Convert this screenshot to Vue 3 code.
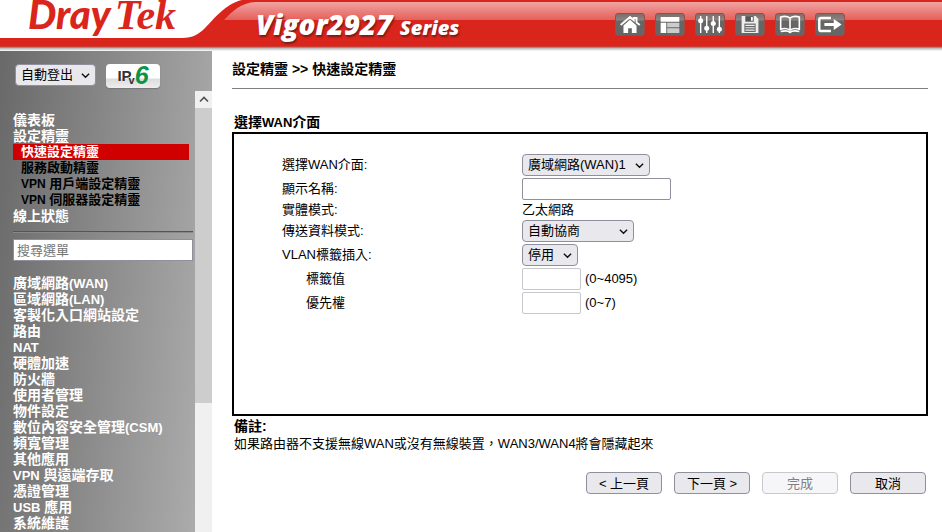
<script setup>
import { ref } from 'vue'

const autoLogout = ref('自動登出')
const search = ref('')
const wan = ref('廣域網路(WAN)1')
const displayName = ref('')
const mode = ref('自動協商')
const vlan = ref('停用')
const tagValue = ref('')
const priority = ref('')

const topMenu = [{ text: '儀表板' }, { text: '設定精靈' }]
const wizardMenu = [
  { text: '快速設定精靈', active: true },
  { text: '服務啟動精靈' },
  { lead: 'VPN', text: ' 用戶端設定精靈' },
  { lead: 'VPN', text: ' 伺服器設定精靈' },
]
const mainMenu = [
  { text: '廣域網路', tail: '(WAN)' },
  { text: '區域網路', tail: '(LAN)' },
  { text: '客製化入口網站設定' },
  { text: '路由' },
  { lead: 'NAT' },
  { text: '硬體加速' },
  { text: '防火牆' },
  { text: '使用者管理' },
  { text: '物件設定' },
  { text: '數位內容安全管理', tail: '(CSM)' },
  { text: '頻寬管理' },
  { text: '其他應用' },
  { lead: 'VPN', text: ' 與遠端存取' },
  { text: '憑證管理' },
  { lead: 'USB', text: ' 應用' },
  { text: '系統維護' },
]
</script>

<template>
  <div class="page">
    <header class="banner">
      <svg class="swoosh" viewBox="0 0 270 51" aria-hidden="true">
        <path d="M0 0H242C225 4 214 19 205 28C199 34 193 38 182 38H0Z" fill="#fff" />
        <path d="M224 20C233 11 241 2 258 2H270V20Z" fill="url(#gloss)" />
        <defs>
          <linearGradient id="gloss" x1="0" y1="0" x2="0" y2="1">
            <stop offset="0" stop-color="#f1a3a1" />
            <stop offset="1" stop-color="#e4605a" />
          </linearGradient>
        </defs>
      </svg>
      <div class="gloss"></div>
      <div class="brand"><span class="dray">Dray</span><span class="tek">Tek</span></div>
      <div class="model">Vigor2927 <small>Series</small></div>
      <nav class="tools">
        <button type="button" aria-label="Home">
          <svg viewBox="0 0 30 22"><path d="M5 11.500L15 3l4 3.400V4h3v5L25.500 11.500" fill="none" stroke="#fff" stroke-width="2" /><path d="M8 12l7-6 7 6v8h-5v-5h-4v5H8z" fill="#fff" /></svg>
        </button>
        <button type="button" aria-label="Layout">
          <svg viewBox="0 0 30 22"><path d="M5 3h20v5H5zM5 9h6v11H5z" fill="#fff" /><path d="M12 9h13v5H12zM12 15h13v5H12z" fill="#ccc" /></svg>
        </button>
        <button type="button" aria-label="Settings">
          <svg viewBox="0 0 30 22"><path d="M5 2v18M11.500 2v18M18.500 2v18M25 2v18" stroke="#fff" stroke-width="1.500" /><g fill="#fff"><circle cx="5" cy="7" r="2.700" /><circle cx="11.500" cy="15" r="2.700" /><circle cx="18.500" cy="10" r="2.700" /><circle cx="25" cy="16" r="2.700" /></g></svg>
        </button>
        <button type="button" aria-label="Save">
          <svg viewBox="0 0 30 22"><path d="M6 2h15l3 3v15H6z" fill="#eee" /><path d="M10 2h9v6h-9z" fill="#555" /><path d="M16 3h2v4h-2z" fill="#fff" /><path d="M9 10h12v9H9z" fill="#666" /><path d="M10 12h10M10 14.500h10M10 17h10" stroke="#eee" stroke-width="1.300" /></svg>
        </button>
        <button type="button" aria-label="Manual">
          <svg viewBox="0 0 30 22"><path d="M15 4c-3-2-7-2-10-1v13c3-1 7-1 10 1c3-2 7-2 10-1V3c-3-1-7-1-10 1zV17M5 18.500c4-1 8-1 10 1c2-2 6-2 10-1" fill="none" stroke="#fff" stroke-width="1.700" /></svg>
        </button>
        <button type="button" aria-label="Logout">
          <svg viewBox="0 0 30 22"><path d="M16 4H5.500q-2 0-2 2v10q0 2 2 2H16" fill="none" stroke="#fff" stroke-width="2.600" /><path d="M9 9.300h10V5l8.500 6-8.500 6v-4.300H9z" fill="#fff" /></svg>
        </button>
      </nav>
    </header>

    <div class="body">
      <aside class="sidebar">
        <div class="session">
          <span class="pick">
            <select v-model="autoLogout" aria-label="自動登出"><option>自動登出</option></select>
            <svg class="chev" viewBox="0 0 10 7"><path d="M1 1.500l4 4 4-4" /></svg>
          </span>
          <button type="button" class="ipv6" aria-label="IPv6">IP<sub>v</sub><i>6</i></button>
        </div>
        <div class="frame">
          <nav class="menu">
            <ul>
              <li v-for="m in topMenu" :key="m.text"><a href="#">{{ m.text }}</a></li>
              <li v-for="m in wizardMenu" :key="m.text" class="sub" :class="{ active: m.active }">
                <a href="#"><span v-if="m.lead" class="latin">{{ m.lead }}</span>{{ m.text }}</a>
              </li>
              <li><a href="#">線上狀態</a></li>
            </ul>
            <hr />
            <input v-model="search" class="search" type="text" placeholder="搜尋選單" aria-label="搜尋選單" />
            <ul>
              <li v-for="(m, i) in mainMenu" :key="i">
                <a href="#"><span v-if="m.lead" class="latin">{{ m.lead }}</span>{{ m.text }}<span v-if="m.tail" class="latin">{{ m.tail }}</span></a>
              </li>
            </ul>
          </nav>
          <div class="scroll">
            <div class="up"><svg viewBox="0 0 10 7"><path d="M1 5.500l4-4 4 4" /></svg></div>
            <div class="thumb"></div>
          </div>
        </div>
      </aside>

      <main class="content">
        <h1>設定精靈 &gt;&gt; 快速設定精靈</h1>
        <h2>選擇<span class="latin">WAN</span>介面</h2>
        <form class="panel" @submit.prevent>
          <div class="row">
            <label for="wan">選擇WAN介面:</label>
            <span class="pick">
              <select id="wan" v-model="wan" class="w-wan"><option>廣域網路(WAN)1</option></select>
              <svg class="chev" viewBox="0 0 10 7"><path d="M1 1.500l4 4 4-4" /></svg>
            </span>
          </div>
          <div class="row">
            <label for="name">顯示名稱:</label>
            <input id="name" v-model="displayName" type="text" class="w-name" />
          </div>
          <div class="row plain"><span class="cap">實體模式:</span><span>乙太網路</span></div>
          <div class="row">
            <label for="mode">傳送資料模式:</label>
            <span class="pick">
              <select id="mode" v-model="mode" class="w-mode"><option>自動協商</option></select>
              <svg class="chev" viewBox="0 0 10 7"><path d="M1 1.500l4 4 4-4" /></svg>
            </span>
          </div>
          <div class="row">
            <label for="vlan">VLAN標籤插入:</label>
            <span class="pick">
              <select id="vlan" v-model="vlan" class="w-vlan"><option>停用</option></select>
              <svg class="chev" viewBox="0 0 10 7"><path d="M1 1.500l4 4 4-4" /></svg>
            </span>
          </div>
          <div class="row">
            <label for="tag" class="deep">標籤值</label>
            <input id="tag" v-model="tagValue" type="text" class="w-small" disabled />
            <span class="hint">(0~4095)</span>
          </div>
          <div class="row">
            <label for="prio" class="deep">優先權</label>
            <input id="prio" v-model="priority" type="text" class="w-small" disabled />
            <span class="hint">(0~7)</span>
          </div>
        </form>
        <div class="note">
          <strong>備註:</strong>
          <p>如果路由器不支援無線WAN或沒有無線裝置，WAN3/WAN4將會隱藏起來</p>
        </div>
        <div class="actions">
          <button type="button">&lt; 上一頁</button>
          <button type="button">下一頁 &gt;</button>
          <button type="button" disabled>完成</button>
          <button type="button">取消</button>
        </div>
      </main>
    </div>
  </div>
</template>

<style>
body {
  background: #fff;
}
</style>

<style scoped>
* {
  box-sizing: border-box;
}
.page {
  display: flex;
  flex-direction: column;
  height: 100vh;
  overflow: hidden;
  font: 13px/16px "Liberation Sans", "Noto Sans CJK TC", sans-serif;
  color: #000;
}
button,
input,
select {
  font: inherit;
  color: inherit;
  margin: 0;
}
.banner {
  position: relative;
  flex: none;
  display: flex;
  height: 51px;
  background: linear-gradient(#da251c 0 46px, #b9504b 47px, #b4b4b4 48px, #e4e4e4 50px, #fff 51px);
}
.swoosh {
  position: absolute;
  left: 0;
  top: 0;
  width: 270px;
  height: 51px;
}
.gloss {
  position: absolute;
  left: 270px;
  right: 0;
  top: 2px;
  height: 18px;
  background: linear-gradient(#f1a3a1, #e4605a);
}
.brand {
  position: relative;
  display: flex;
  align-items: baseline;
  gap: 4px;
  width: 256px;
  padding-left: 28px;
  color: #da251c;
  white-space: nowrap;
}
.dray {
  font: italic 900 40px/28px Lato, sans-serif;
}
.tek {
  font: bold italic 42px/28px "Liberation Serif", serif;
}
.model {
  position: relative;
  width: 359px;
  padding-top: 8px;
  color: #fff;
  font: italic 800 28px/32px "Open Sans", sans-serif;
  text-shadow: 1px 2px 2px #7a1a16;
  white-space: nowrap;
}
.model small {
  font-size: 20px;
}
.tools {
  position: relative;
  display: flex;
  gap: 10px;
  padding-top: 13px;
}
.tools button {
  width: 30px;
  height: 23px;
  padding: 0;
  border: 1px solid #a04a46;
  border-radius: 3px;
  background: linear-gradient(#7d6d6c, #8a8482 6px, #666 7px);
}
.tools svg {
  display: block;
  width: 28px;
  height: 21px;
}
.body {
  flex: 1;
  display: flex;
  min-height: 0;
}
.sidebar {
  flex: none;
  display: flex;
  flex-direction: column;
  width: 212px;
  background: linear-gradient(95deg, #696969, #b0b0b0);
}
.session {
  flex: none;
  display: flex;
  gap: 10px;
  height: 40px;
  padding: 13px 0 0 15px;
}
.pick {
  position: relative;
  display: inline-flex;
}
.pick select {
  appearance: none;
  height: 22px;
  padding: 0 20px 0 5px;
  border: 1px solid #8f8f9d;
  border-radius: 4px;
  background: #e9e9ed;
}
.session select {
  width: 81px;
}
.chev {
  position: absolute;
  right: 6px;
  top: 8px;
  width: 9px;
  height: 7px;
  pointer-events: none;
}
.chev path,
.up path {
  fill: none;
  stroke: #111;
  stroke-width: 1.6;
}
.ipv6 {
  display: flex;
  justify-content: center;
  width: 54px;
  height: 24px;
  padding: 0;
  border: 0;
  border-radius: 4px;
  background: linear-gradient(#fff 0 14px, #dcdcdc 15px, #eee);
  box-shadow: 0 1px 1px #777;
  font: bold 15px/23px "Liberation Sans", sans-serif;
  color: #333;
}
.ipv6 sub {
  margin: 6px 0 0 -3px;
  font-size: 11px;
  line-height: 20px;
}
.ipv6 i {
  color: #0c9444;
  font-size: 25px;
}
.frame {
  flex: 1;
  display: flex;
  min-height: 0;
}
.menu {
  flex: 1;
  overflow: hidden;
  padding: 21px 2px 0 13px;
}
.menu ul {
  margin: 0;
  padding: 0;
  list-style: none;
}
.menu li {
  height: 16px;
  margin-right: 4px;
  font-size: 14px;
  font-weight: bold;
  white-space: nowrap;
}
.menu a {
  color: #fff;
  text-decoration: none;
}
.menu .sub {
  padding-left: 8px;
  font-size: 13px;
}
.menu .sub a {
  color: #000;
}
.menu .active {
  background: #d00000;
}
.menu .active a {
  color: #fff;
}
.latin {
  font-size: 13px;
}
.sub .latin {
  font-size: 12px;
}
.menu hr {
  margin: 7px 0 6px;
  border: 0;
  border-top: 1px solid #555;
  border-bottom: 1px solid #888;
}
.search {
  display: block;
  width: 100%;
  height: 22px;
  margin-bottom: 14px;
  padding: 0 3px;
  border: 1px solid #8f8f9d;
  background: #fff;
}
.search::placeholder {
  color: #757575;
  opacity: 1;
}
.scroll {
  flex: none;
  width: 17px;
  background: #f0f0f0;
}
.up {
  display: flex;
  align-items: center;
  justify-content: center;
  height: 17px;
}
.up svg {
  width: 10px;
  height: 7px;
}
.up path {
  stroke: #505050;
}
.thumb {
  height: 67%;
  background: #cdcdcd;
}
.content {
  flex: 1;
  min-width: 0;
  padding: 10px 14px 0 20px;
}
h1,
h2 {
  margin: 0;
  font-size: 14px;
  line-height: 16px;
}
h1 {
  padding-bottom: 11px;
  border-bottom: 1px solid #808080;
}
h2 {
  padding: 25px 0 1px 2px;
}
.panel {
  display: flex;
  flex-direction: column;
  gap: 2px;
  min-height: 284px;
  padding: 20px 0 0 48px;
  border: 2px solid #000;
}
.row {
  display: flex;
  align-items: center;
  min-height: 22px;
}
.row.plain {
  min-height: 16px;
}
.row label,
.cap {
  width: 240px;
}
.row .deep {
  padding-left: 24px;
}
.row input {
  height: 22px;
  border: 1px solid #8f8f9d;
  border-radius: 2px;
  background: #fff;
}
.row input:disabled {
  border-color: #c7c7ce;
}
.w-wan {
  width: 128px;
}
.w-name {
  width: 149px;
}
.w-mode {
  width: 112px;
}
.w-vlan {
  width: 56px;
}
.w-small {
  width: 59px;
}
.hint {
  padding-left: 4px;
}
.note {
  padding: 2px 0 0 2px;
}
.note strong {
  display: block;
  font-size: 14px;
}
.note p {
  margin: 2px 0 0;
}
.actions {
  display: flex;
  justify-content: flex-end;
  gap: 12px;
  padding: 20px 2px 0 0;
}
.actions button {
  width: 76px;
  height: 22px;
  padding: 2px 0 0;
  border: 1px solid #8f8f9d;
  border-radius: 4px;
  background: #e9e9ed;
}
.actions button:disabled {
  border-color: #c7c7ce;
  background: #f6f6f8;
  color: #808080;
}
</style>
